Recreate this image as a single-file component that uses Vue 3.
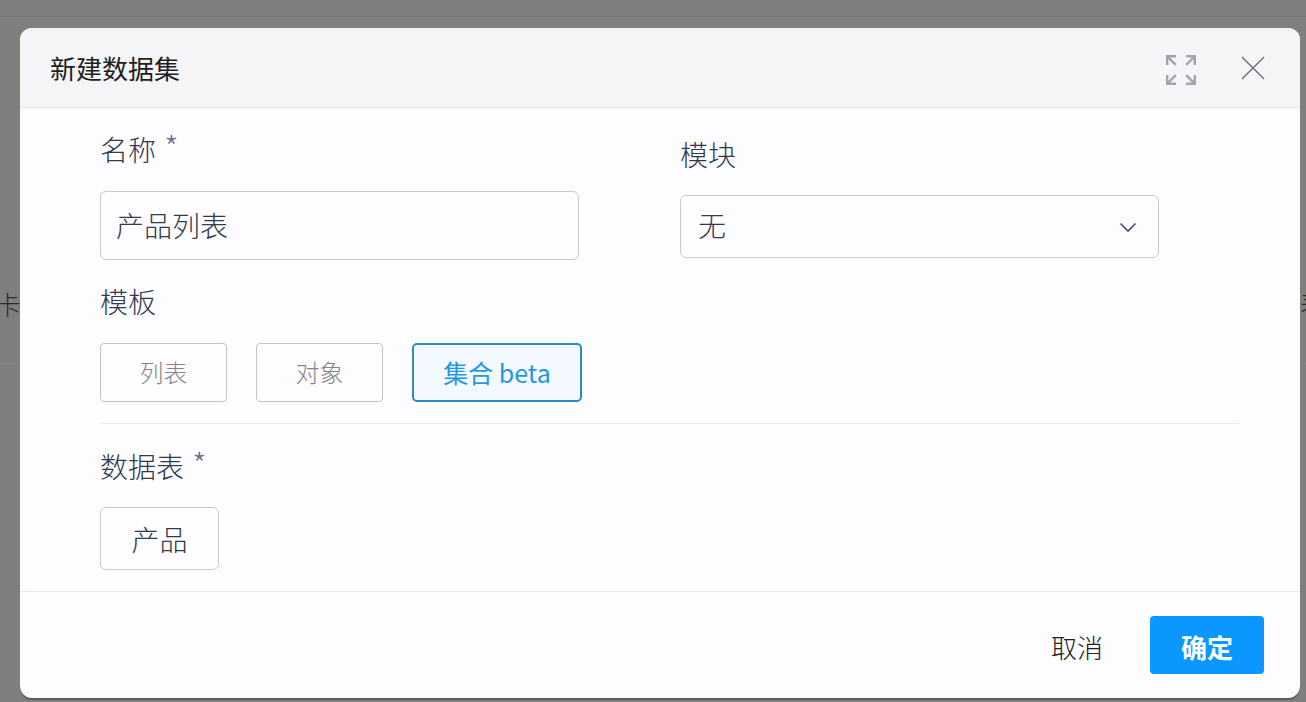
<script setup>
const templates = [
  { label: '列表', active: false },
  { label: '对象', active: false },
  { label: '集合 beta', active: true }
]
</script>

<template>
  <div class="page">
    <div class="backdrop" aria-hidden="true">
      <span class="bg-line bg-line-top"></span>
      <span class="bg-line bg-line-mid"></span>
      <span class="bg-text bg-left">卡</span>
      <span class="bg-text bg-right">表</span>
    </div>
    <section class="modal">
      <header class="modal-head">
        <h2>新建数据集</h2>
        <div class="head-actions">
          <svg class="expand" width="30" height="30" viewBox="0 0 30 30" fill="none">
            <g stroke="#a3a5ad" stroke-width="2.4">
              <path d="M1.200 10V1.200H10M1.800 1.800l8 8" />
              <path d="M20 1.200h8.800V10M28.200 1.800l-8 8" />
              <path d="M1.200 20v8.800H10M1.800 28.200l8-8" />
              <path d="M20 28.800h8.800V20M28.200 28.200l-8-8" />
            </g>
          </svg>
          <svg class="close" width="24" height="24" viewBox="0 0 24 24" fill="none">
            <path d="M1 1l22 22M23 1L1 23" stroke="#6f7178" stroke-width="1.5" />
          </svg>
        </div>
      </header>

      <div class="modal-body">
        <div class="field-row">
          <div class="field name-field">
            <label>名称 <em>*</em></label>
            <div class="control name-input">产品列表</div>
          </div>
          <div class="field module-field">
            <label>模块</label>
            <div class="control select">
              <span>无</span>
              <svg width="18" height="12" viewBox="0 0 18 12" fill="none">
                <path d="M1.500 2.500L9 10l7.500-7.500" stroke="#47506b" stroke-width="1.600" />
              </svg>
            </div>
          </div>
        </div>

        <label class="template-label">模板</label>
        <div class="template-list">
          <button
            v-for="item in templates"
            :key="item.label"
            type="button"
            class="template"
            :class="{ active: item.active }"
          >{{ item.label }}</button>
        </div>

        <div class="divider"></div>

        <label class="table-label">数据表 <em>*</em></label>
        <button type="button" class="table-chip">产品</button>
      </div>

      <footer class="modal-foot">
        <button type="button" class="cancel">取消</button>
        <button type="button" class="confirm">确定</button>
      </footer>
    </section>
  </div>
</template>

<style>
html, body { margin: 0; background: #807f7e; }
</style>

<style scoped>
.page {
  position: relative;
  box-sizing: border-box;
  width: 1306px;
  height: 702px;
  padding: 28px 6px 4px 20px;
  overflow: hidden;
  background: #807f7e;
  font-family: "Noto Sans CJK SC", "Noto Sans", sans-serif;
}
.backdrop { position: absolute; inset: 0; }
.bg-line { position: absolute; left: 0; right: 0; height: 1px; background: #787776; }
.bg-line-top { top: 16px; }
.bg-line-mid { top: 363px; background: #858483; }
.bg-text { position: absolute; color: #2c2c2c; font-size: 26px; line-height: 32px; font-weight: 300; }
.bg-left { left: -5px; top: 288px; }
.bg-right { left: 1300px; top: 288px; }

.modal {
  position: relative;
  display: flex;
  flex-direction: column;
  box-sizing: border-box;
  width: 1280px;
  height: 670px;
  border-radius: 12px;
  overflow: hidden;
  background: #fdfcfe;
  box-shadow: 0 2px 0 #5c5d5c;
}
.modal-head {
  display: flex;
  align-items: center;
  justify-content: space-between;
  box-sizing: border-box;
  height: 80px;
  padding: 0 35px 0 30px;
  background: #f5f5f8;
  border-bottom: 1px solid #e6e6ea;
}
.modal-head h2 {
  margin: 0;
  font-size: 26px;
  line-height: 36px;
  font-weight: 400;
  color: #1e1e20;
}
.head-actions { display: flex; align-items: center; gap: 45px; }
.expand { margin-top: 4px; }
.close { margin-top: 1px; }
.modal-body {
  flex: 1;
  padding: 0 61px 0 80px;
  color: #2f3a4e;
}
label { display: block; font-size: 28px; line-height: 36px; font-weight: 300; }
em { font-style: normal; color: #67718a; font-size: 32px; line-height: 0; vertical-align: 1px; margin-left: 2px; }
.field-row { display: flex; }
.field { width: 479px; }
.name-field { padding-top: 23px; }
.name-field label { margin-bottom: 24px; }
.module-field { margin-left: 101px; padding-top: 28px; }
.module-field label { margin-bottom: 23px; }
.control {
  box-sizing: border-box;
  border: 1px solid #c9cad0;
  border-radius: 6px;
  background: #fdfcff;
  font-size: 28px;
  font-weight: 300;
  color: #333a48;
  display: flex;
  align-items: center;
}
.name-input { height: 69px; padding: 0 15px 2px; }
.select {
  height: 63px;
  padding: 0 21px 0 17px;
  justify-content: space-between;
}
.select span { margin-bottom: 4px; }
.template-label { margin-top: 23px; }
.template-list { display: flex; gap: 29px; margin-top: 24px; }
button { font-family: inherit; cursor: pointer; }
.template {
  box-sizing: border-box;
  width: 127px;
  height: 59px;
  padding: 0 0 2px;
  border: 1px solid #c4c4c6;
  border-radius: 4px;
  background: #fdfcfe;
  color: #858587;
  font-size: 24px;
  font-weight: 300;
}
.template.active {
  width: 170px;
  border: 2px solid #2b8cc4;
  border-radius: 5px;
  background: #f3f9fe;
  color: #1f97e6;
  font-size: 25px;
  font-weight: 400;
}
.divider { height: 1px; margin-top: 21px; background: #e9e9ed; }
.table-label { margin-top: 24px; }
.table-chip {
  display: block;
  box-sizing: border-box;
  width: 119px;
  height: 63px;
  margin-top: 23px;
  padding: 0;
  border: 1px solid #c9cad0;
  border-radius: 6px;
  background: #fdfcfe;
  color: #333a48;
  font-size: 28px;
  font-weight: 300;
}
.modal-foot {
  display: flex;
  align-items: center;
  justify-content: flex-end;
  gap: 47px;
  box-sizing: border-box;
  height: 107px;
  padding: 0 36px 0 0;
  border-top: 1px solid #e9e9ed;
}
.cancel {
  padding: 3px 0 0;
  border: 0;
  background: none;
  color: #202022;
  font-size: 26px;
  font-weight: 300;
}
.confirm {
  width: 114px;
  height: 58px;
  padding: 3px 0 0;
  border: 0;
  border-radius: 4px;
  background: #0b97fd;
  color: #fff;
  font-size: 26px;
  font-weight: 700;
}
</style>
